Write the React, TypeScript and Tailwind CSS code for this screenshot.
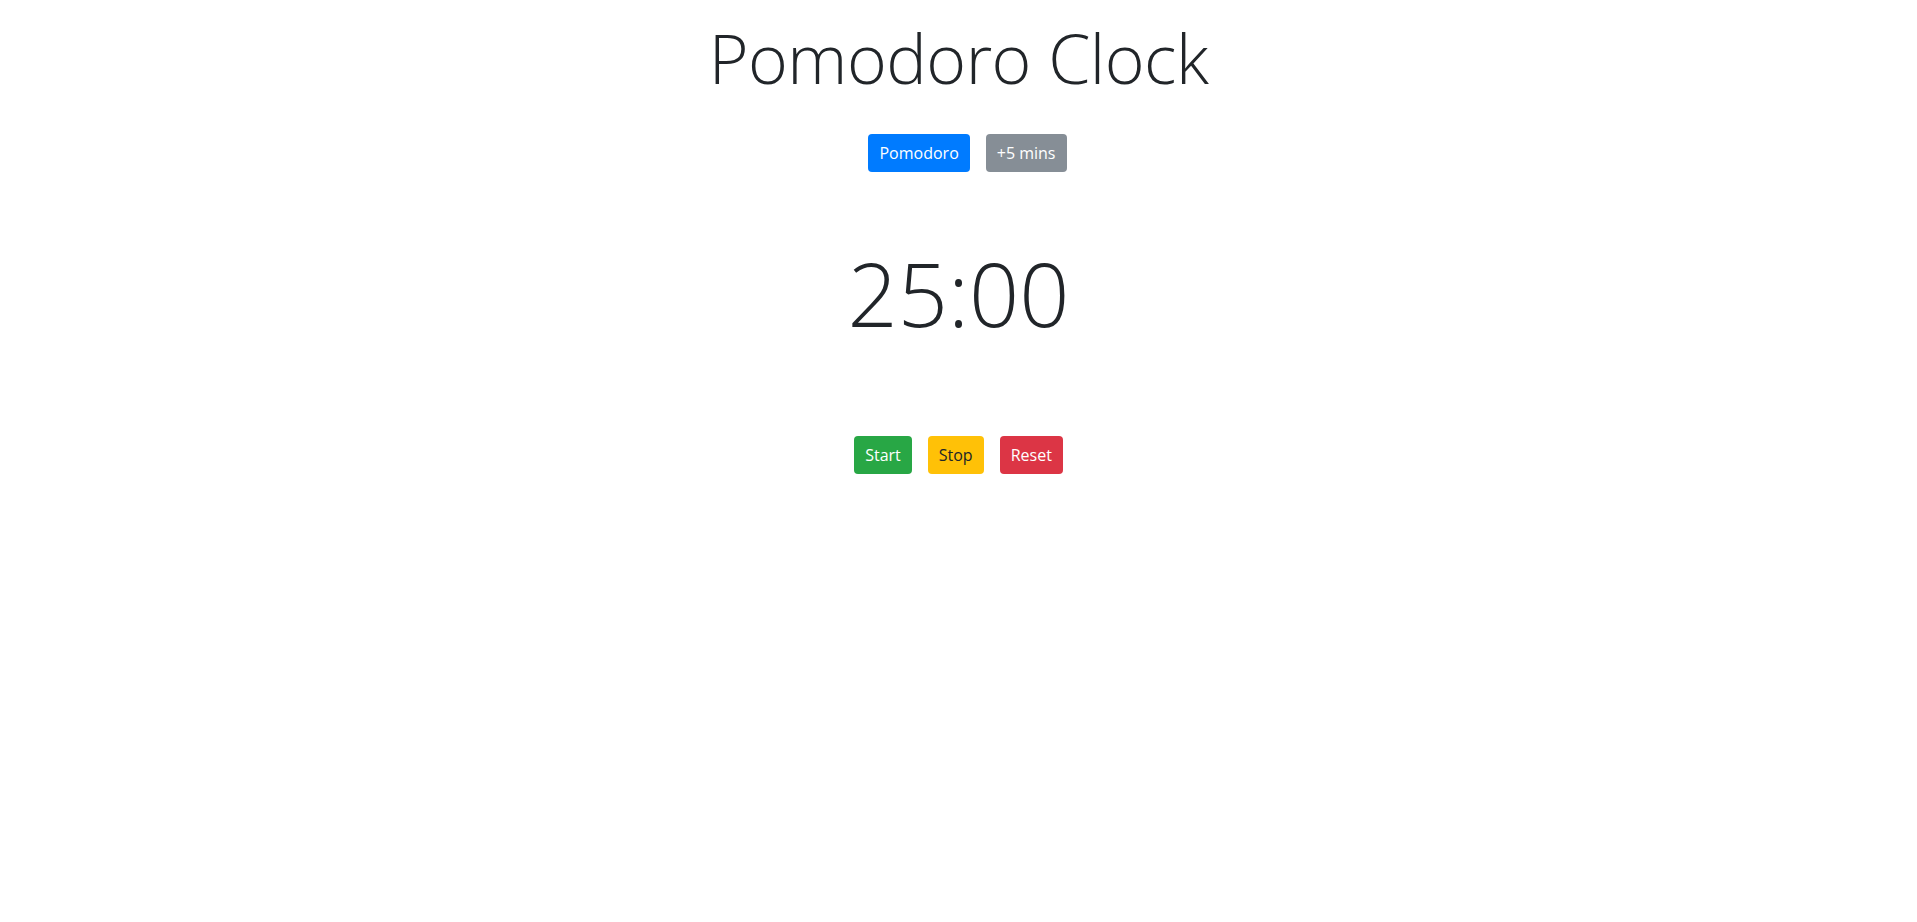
import React from 'react';

const btn = "h-[38px] px-[11px] rounded text-[16px] leading-[24px] border-0";

export default function App() {
  return (
    <div className="min-h-[922px] bg-white text-[#212529] flex flex-col items-center" style={{ fontFamily: '"Open Sans", "Liberation Sans", sans-serif' }}>
      <h1 className="mt-[17px] text-[68px] leading-[1.2] font-light tracking-[-0.5px]">Pomodoro Clock</h1>
      <div className="mt-[35px] flex gap-4 pl-[18px]">
        <button className={btn + " bg-[#007bff] text-white"}>Pomodoro</button>
        <button className={btn + " bg-[#868e96] text-white"}>+5 mins</button>
      </div>
      <div className="mt-[69px] text-[88px] leading-[1.2] font-light">25:00</div>
      <div className="mt-[90px] flex gap-4">
        <button className={btn + " bg-[#28a745] text-white"}>Start</button>
        <button className={btn + " bg-[#ffc107] text-[#212529]"}>Stop</button>
        <button className={btn + " bg-[#dc3545] text-white"}>Reset</button>
      </div>
    </div>
  );
}
